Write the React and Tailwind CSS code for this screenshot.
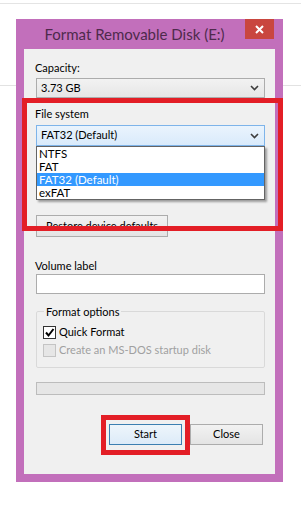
import { useState } from "react";

const font = { fontFamily: 'Lato, "Liberation Sans", sans-serif' };

function Chevron() {
  return (
    <svg width="9" height="6" viewBox="0 0 9 6" className="shrink-0">
      <path d="M1 1 L4.5 4.5 L8 1" fill="none" stroke="#3d3d3d" strokeWidth="1.6" />
    </svg>
  );
}

function Check() {
  return (
    <svg width="11" height="11" viewBox="0 0 11 11">
      <path d="M2 5.5 L4.5 8.5 L9.5 2" fill="none" stroke="#000" strokeWidth="2" />
    </svg>
  );
}

function App() {
  const [quick, setQuick] = useState(true);
  const options = ["NTFS", "FAT", "FAT32 (Default)", "exFAT"];

  return (
    <div
      className="relative w-[301px] h-[505px] bg-white overflow-hidden pt-[3px] text-[11px] text-black"
      style={font}
    >
      <div className="h-px bg-[#e4e4e4]" />
      {/* faint page line behind the window */}
      <div className="absolute left-0 right-0 top-[85px] h-px bg-[#e2e2e2]" />

      <div className="relative mt-[15px] ml-[16px] w-[267px] bg-[#c26fbb] px-[8px] pb-[8px]">
        {/* title bar */}
        <div className="flex h-[30px] items-start">
          <div className="flex-1 h-[30px] flex items-center justify-center text-[15px] text-[#4e2a4c]">
            Format Removable Disk (E:)
          </div>
          <button className="mr-[1px] w-[29px] h-[20px] bg-[#c9463f] flex items-center justify-center">
            <svg width="9" height="9" viewBox="0 0 9 9">
              <path d="M1 1 L8 8 M8 1 L1 8" stroke="#fff" strokeWidth="2" />
            </svg>
          </button>
        </div>

        {/* client area */}
        <div className="relative bg-[#f0f0f0] pl-[12px] pr-[10px] pt-[11px] pb-[29px]">
          <div className="h-[15px] leading-[15px] -ml-px">Capacity:</div>
          <div className="mt-[3px] h-[20px] border border-[#acacac] bg-linear-to-b from-[#f2f2f2] to-[#e6e6e6] flex items-center justify-between pl-[4px] pr-[5px]">
            <span>3.73 GB</span>
            <Chevron />
          </div>

          <div className="mt-[8px] h-[15px] leading-[15px] -ml-px">File system</div>
          <div className="mt-[4px] h-[21px] border border-[#7eb4ea] bg-linear-to-b from-[#eaf4fd] to-[#d9eafb] flex items-center justify-between pl-[4px] pr-[5px]">
            <span>FAT32 (Default)</span>
            <Chevron />
          </div>

          <button className="mt-[69px] h-[22px] w-[132px] border border-[#acacac] bg-linear-to-b from-[#f2f2f2] to-[#e4e4e4] flex items-center justify-center whitespace-nowrap">
            Restore device defaults
          </button>

          <div className="mt-[21px] h-[15px] leading-[15px] -ml-px">Volume label</div>
          <input
            className="mt-px block w-full h-[20px] border border-[#acacac] bg-white outline-none px-[3px]"
            defaultValue=""
          />

          <fieldset className="mt-[10px] border border-[#d9d9d9] rounded-[2px] pl-[6px] pb-[9px]">
            <legend className="ml-[1px] px-[2px] h-[15px] leading-[15px]">Format options</legend>
            <label className="mt-[6px] flex items-center h-[15px] gap-[3px]">
              <span
                onClick={() => setQuick(!quick)}
                className="w-[13px] h-[13px] border border-[#333] bg-white flex items-center justify-center"
              >
                {quick && <Check />}
              </span>
              <span>Quick Format</span>
            </label>
            <label className="mt-[3px] flex items-center h-[15px] gap-[3px] text-[#a0a0a0]">
              <span className="w-[13px] h-[13px] border border-[#c4c4c4] bg-[#e6e6e6]" />
              <span>Create an MS-DOS startup disk</span>
            </label>
          </fieldset>

          <div className="mt-[14px] h-[13px] border border-[#bcbcbc] bg-[#e6e6e6]" />

          <div className="mt-[29px] flex justify-end gap-[8px] pr-[2px]">
            <button className="w-[73px] h-[21px] border border-[#3c7fb1] bg-linear-to-b from-[#eef5fb] to-[#dcebf8] flex items-center justify-center">
              Start
            </button>
            <button className="w-[73px] h-[21px] border border-[#acacac] bg-linear-to-b from-[#f2f2f2] to-[#e4e4e4] flex items-center justify-center">
              Close
            </button>
          </div>

          {/* open dropdown list */}
          <div className="absolute left-[12px] top-[97px] w-[229px] border border-[#646464] bg-white shadow-[2px_2px_2px_rgba(0,0,0,0.35)] text-[11.5px]">
            {options.map((o) => (
              <div
                key={o}
                className={`h-[13px] leading-[13px] pl-[2px] ${
                  o === "FAT32 (Default)" ? "bg-[#3399ff] text-white" : ""
                }`}
              >
                {o}
              </div>
            ))}
          </div>

          {/* highlight boxes */}
          <div className="absolute left-[-2px] top-[49px] w-[261px] h-[133px] border-[5px] border-[#e31e26]" />
          <div className="absolute left-[77px] top-[366px] w-[89px] h-[40px] border-[5px] border-[#e31e26]" />
        </div>
      </div>
    </div>
  );
}

export default App;
